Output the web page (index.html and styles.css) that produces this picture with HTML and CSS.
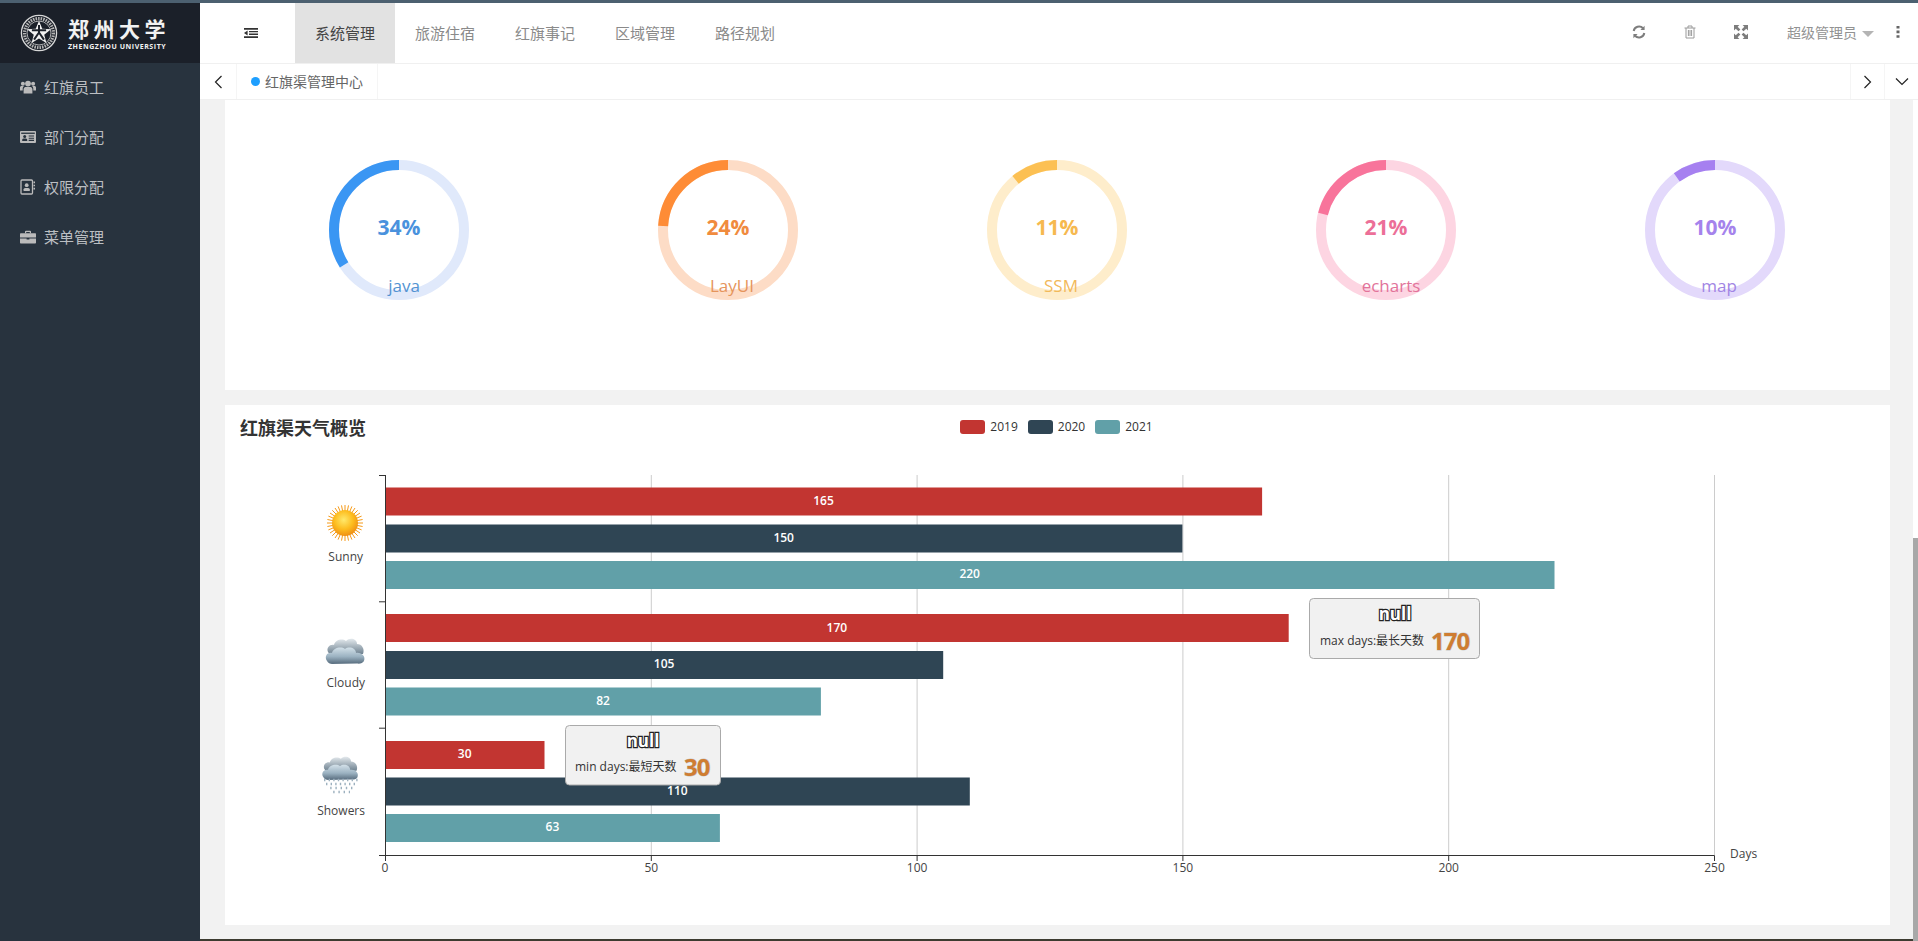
FILE: index.html
```html
<!DOCTYPE html>
<html lang="zh-CN">
<head>
<meta charset="utf-8">
<title>红旗渠管理中心</title>
<link rel="stylesheet" href="styles.css">
</head>
<body>
<div class="topline"></div>
<div class="app">
  <aside class="sidebar">
    <div class="logo">
      <svg class="emblem" width="38" height="38" viewBox="0 0 40 40">
        <circle cx="20" cy="20" r="18.5" fill="none" stroke="#d8d8d8" stroke-width="1.4"/>
        <circle cx="20" cy="20" r="15.2" fill="none" stroke="#b5b5b5" stroke-width="3.4" stroke-dasharray="1.6 1.1"/>
        <circle cx="20" cy="20" r="12.6" fill="none" stroke="#d8d8d8" stroke-width="0.8"/>
        <polygon points="20,7 23.4,15.4 32.6,16 25.5,21.8 27.8,30.6 20,25.8 12.2,30.6 14.5,21.8 7.4,16 16.6,15.4" fill="#f2f2f2"/>
        <path d="M20 11.5V20M12.5 17.2H27.5M20 19.5L14.8 27M20 19.5L25.2 27" fill="none" stroke="#1b2029" stroke-width="2.1"/>
      </svg>
      <div class="wordmark">
        <div class="wordmark-cn">郑州大学</div>
        <div class="wordmark-en">ZHENGZHOU UNIVERSITY</div>
      </div>
    </div>
    <ul class="menu">
      <li class="menu-item">
        <svg width="16" height="16" viewBox="0 0 16 16"><circle cx="8" cy="4.6" r="2.9" fill="#bbb"/><circle cx="2.9" cy="4.8" r="2" fill="#bbb"/><circle cx="13.1" cy="4.8" r="2" fill="#bbb"/><path d="M3.6 14.6V10.4C3.6 8.6 5 8 6 8H10C11 8 12.4 8.6 12.4 10.4V14.6Z" fill="#bbb"/><path d="M0 11.4V8.6C0 7.6 .8 7.1 1.6 7.1H4C2.9 8 2.7 9 2.7 10.4V11.4ZM16 11.4V8.6C16 7.6 15.2 7.1 14.4 7.1H12C13.1 8 13.3 9 13.3 10.4V11.4Z" fill="#bbb"/></svg>
        <span>红旗员工</span>
      </li>
      <li class="menu-item">
        <svg width="16" height="16" viewBox="0 0 16 16"><rect y="2" width="16" height="12" rx="1" fill="#bbb"/><rect x="1.2" y="3.6" width="13.6" height="1.3" fill="#28333e"/><circle cx="4.7" cy="7.6" r="1.5" fill="#28333e"/><path d="M2.2 12V10.7C2.2 9.9 3 9.5 4.7 9.5S7.2 9.9 7.2 10.7V12Z" fill="#28333e"/><path d="M8.7 7H14M8.7 9.2H14M8.7 11.4H14" stroke="#28333e" stroke-width="1.1"/></svg>
        <span>部门分配</span>
      </li>
      <li class="menu-item">
        <svg width="16" height="16" viewBox="0 0 16 16"><rect x="1" y="1" width="11.5" height="14" rx="1" fill="none" stroke="#bbb" stroke-width="1.3"/><circle cx="6.7" cy="6.2" r="1.9" fill="#bbb"/><path d="M3.6 12V10.3C3.6 9.3 4.8 8.9 6.7 8.9S9.8 9.3 9.8 10.3V12Z" fill="#bbb"/><path d="M13.5 3.4H15M13.5 6.5H15M13.5 9.6H15" stroke="#bbb" stroke-width="1.6"/></svg>
        <span>权限分配</span>
      </li>
      <li class="menu-item">
        <svg width="16" height="16" viewBox="0 0 16 16"><path d="M5 4.2V2.6C5 2 5.4 1.7 6 1.7H10C10.6 1.7 11 2 11 2.6V4.2H9.8V2.9H6.2V4.2Z" fill="#bbb"/><path d="M0 5.2C0 4.6.4 4.2 1 4.2H15C15.6 4.2 16 4.6 16 5.2V8.4H0Z" fill="#bbb"/><path d="M0 9.4H6.6V10.6H9.4V9.4H16V13.4C16 14 15.6 14.4 15 14.4H1C.4 14.4 0 14 0 13.4Z" fill="#bbb"/></svg>
        <span>菜单管理</span>
      </li>
    </ul>
  </aside>

  <div class="main">
    <header class="header">
      <div class="toggle">
        <svg width="14" height="10" viewBox="0 0 14 10"><path d="M0 0H14V1.8H0ZM5 2.9H14V4.3H5ZM5 5.5H14V7H5ZM0 8.2H14V10H0ZM3.6 2.6V7.4L0 5Z" fill="#333"/></svg>
      </div>
      <nav class="nav">
        <a class="nav-item nav-item-active">系统管理</a>
        <a class="nav-item">旅游住宿</a>
        <a class="nav-item">红旗事记</a>
        <a class="nav-item">区域管理</a>
        <a class="nav-item">路径规划</a>
      </nav>
      <div class="tools">
        <svg class="tool tool-refresh" width="14" height="14" viewBox="0 0 14 14"><path d="M1.7 6A5.4 5.4 0 0 1 11 3.2M12.3 8A5.4 5.4 0 0 1 3 10.8" fill="none" stroke="#7d7d7d" stroke-width="2"/><path d="M12.6 .8V5H8.4ZM1.4 13.2V9H5.6Z" fill="#7d7d7d"/></svg>
        <svg class="tool tool-trash" width="12" height="14" viewBox="0 0 12 14"><path d="M.5 3H11.5M4 3V1H8V3M2 3V13H10V3M4.4 5V11M6 5V11M7.6 5V11" fill="none" stroke="#9a9a9a" stroke-width="1"/></svg>
        <svg class="tool tool-full" width="14" height="14" viewBox="0 0 13 13"><path d="M0 0H5L3.4 1.6 5.9 4.2 4.2 5.9 1.6 3.4 0 5ZM13 0V5L11.4 3.4 8.8 5.9 7.1 4.2 9.6 1.6 8 0ZM0 13V8L1.6 9.6 4.2 7.1 5.9 8.8 3.4 11.4 5 13ZM13 13H8L9.6 11.4 7.1 8.8 8.8 7.1 11.4 9.6 13 8Z" fill="#7d7d7d"/></svg>
        <span class="user">超级管理员</span>
        <span class="caret"></span>
        <svg class="tool-more" width="4" height="12" viewBox="0 0 4 12"><path d="M.5 0H3.5V2.6H.5ZM.5 4.6H3.5V7.2H.5ZM.5 9.2H3.5V11.8H.5Z" fill="#666"/></svg>
      </div>
    </header>

    <div class="tabbar">
      <div class="tab-arrow">
        <svg width="9" height="14" viewBox="0 0 9 14"><path d="M7.5 1 1.5 7 7.5 13" fill="none" stroke="#222" stroke-width="1.2"/></svg>
      </div>
      <div class="tab">
        <span class="tab-dot"></span>
        <span class="tab-text">红旗渠管理中心</span>
      </div>
      <div class="tab-spacer"></div>
      <div class="tab-arrow tab-arrow-right">
        <svg width="9" height="14" viewBox="0 0 9 14"><path d="M1.5 1 7.5 7 1.5 13" fill="none" stroke="#222" stroke-width="1.2"/></svg>
      </div>
      <div class="tab-arrow tab-arrow-right">
        <svg width="14" height="9" viewBox="0 0 14 9"><path d="M1 1.5 7 7.5 13 1.5" fill="none" stroke="#222" stroke-width="1.2"/></svg>
      </div>
    </div>

    <main class="content">
      <section class="card card-skills">
        <div class="donuts">
          <svg class="donut" width="150" height="140" viewBox="0 0 150 140">
            <circle cx="70" cy="70" r="65" class="ring ring-blue-bg"/>
            <circle cx="70" cy="70" r="65" class="ring ring-blue" pathLength="100" stroke-dasharray="34 66" stroke-dashoffset="34" transform="rotate(-90 70 70)"/>
            <text x="70" y="75" class="donut-pct text-blue">34%</text>
            <text x="75" y="132" class="donut-name name-blue">java</text>
          </svg>
          <svg class="donut" width="150" height="140" viewBox="0 0 150 140">
            <circle cx="70" cy="70" r="65" class="ring ring-orange-bg"/>
            <circle cx="70" cy="70" r="65" class="ring ring-orange" pathLength="100" stroke-dasharray="24 76" stroke-dashoffset="24" transform="rotate(-90 70 70)"/>
            <text x="70" y="75" class="donut-pct text-orange">24%</text>
            <text x="74" y="132" class="donut-name name-orange">LayUI</text>
          </svg>
          <svg class="donut" width="150" height="140" viewBox="0 0 150 140">
            <circle cx="70" cy="70" r="65" class="ring ring-yellow-bg"/>
            <circle cx="70" cy="70" r="65" class="ring ring-yellow" pathLength="100" stroke-dasharray="11 89" stroke-dashoffset="11" transform="rotate(-90 70 70)"/>
            <text x="70" y="75" class="donut-pct text-yellow">11%</text>
            <text x="74" y="132" class="donut-name name-yellow">SSM</text>
          </svg>
          <svg class="donut" width="150" height="140" viewBox="0 0 150 140">
            <circle cx="70" cy="70" r="65" class="ring ring-pink-bg"/>
            <circle cx="70" cy="70" r="65" class="ring ring-pink" pathLength="100" stroke-dasharray="21 79" stroke-dashoffset="21" transform="rotate(-90 70 70)"/>
            <text x="70" y="75" class="donut-pct text-pink">21%</text>
            <text x="75" y="132" class="donut-name name-pink">echarts</text>
          </svg>
          <svg class="donut" width="150" height="140" viewBox="0 0 150 140">
            <circle cx="70" cy="70" r="65" class="ring ring-purple-bg"/>
            <circle cx="70" cy="70" r="65" class="ring ring-purple" pathLength="100" stroke-dasharray="10 90" stroke-dashoffset="10" transform="rotate(-90 70 70)"/>
            <text x="70" y="75" class="donut-pct text-purple">10%</text>
            <text x="74" y="132" class="donut-name name-purple">map</text>
          </svg>
        </div>
      </section>

      <section class="card card-weather">
        <div class="card-head">
          <h2 class="card-title">红旗渠天气概览</h2>
          <div class="legend">
            <span class="legend-item"><i class="swatch swatch-red"></i>2019</span>
            <span class="legend-item"><i class="swatch swatch-navy"></i>2020</span>
            <span class="legend-item"><i class="swatch swatch-teal"></i>2021</span>
          </div>
        </div>
        <svg class="chart" width="1665" height="474" viewBox="225 451 1665 474">
          <defs>
            <radialGradient id="sunFill" cx="0.45" cy="0.38" r="0.65">
              <stop offset="0" stop-color="#ffe96b"/>
              <stop offset="0.55" stop-color="#fdbd1f"/>
              <stop offset="1" stop-color="#ee8a12"/>
            </radialGradient>
            <linearGradient id="cloudBack" x1="0" y1="0" x2="0" y2="1">
              <stop offset="0" stop-color="#e2e8ec"/>
              <stop offset="1" stop-color="#5f7484"/>
            </linearGradient>
            <linearGradient id="cloudFront" gradientUnits="userSpaceOnUse" x1="0" y1="-4" x2="0" y2="12">
              <stop offset="0" stop-color="#d6e3eb"/>
              <stop offset="0.6" stop-color="#9bb2c1"/>
              <stop offset="1" stop-color="#5f7485"/>
            </linearGradient>
            <g id="clouds">
              <path fill="url(#cloudBack)" d="M-17 1C-19-3-15-7-11-6C-10-11-3-13 1-10C5-14 12-12 12-7C17-7 20-2 18 3L-14 5Z"/>
              <path fill="url(#cloudFront)" d="M-18 10C-21 6-18 1-13 2C-12-3-4-5 0-2C4-5 11-3 11 2C16 1 21 5 19 10C18 12 15 13 12 12.500L-13 13C-15 13-17 12-18 10Z"/>
            </g>
          </defs>

          <g class="grid">
            <path d="M651.3 475V855M917.1 475V855M1182.9 475V855M1448.7 475V855M1714.5 475V855"/>
          </g>

          <rect x="385" y="487.500" width="877.1" height="28" class="bar-red"/>
          <rect x="385" y="524.500" width="797.4" height="28" class="bar-navy"/>
          <rect x="385" y="561" width="1169.5" height="28" class="bar-teal"/>
          <rect x="385" y="614" width="903.7" height="28" class="bar-red"/>
          <rect x="385" y="651" width="558.2" height="28" class="bar-navy"/>
          <rect x="385" y="687.500" width="435.9" height="28" class="bar-teal"/>
          <rect x="385" y="741" width="159.5" height="28" class="bar-red"/>
          <rect x="385" y="777.500" width="584.8" height="28" class="bar-navy"/>
          <rect x="385" y="814" width="334.9" height="28" class="bar-teal"/>

          <text x="823.5" y="505" class="bar-label">165</text>
          <text x="783.7" y="541.500" class="bar-label">150</text>
          <text x="969.7" y="578" class="bar-label">220</text>
          <text x="836.9" y="631.500" class="bar-label">170</text>
          <text x="664.1" y="668" class="bar-label">105</text>
          <text x="603" y="704.500" class="bar-label">82</text>
          <text x="464.7" y="758" class="bar-label">30</text>
          <text x="677.4" y="794.500" class="bar-label">110</text>
          <text x="552.4" y="831" class="bar-label">63</text>

          <path class="axis" d="M385.5 475V855.5M379 475.5H385.5M379 601.8H385.5M379 728.2H385.5M379 855.5H1714.5M385.5 855.5V861M651.3 855.5V861M917.1 855.5V861M1182.9 855.5V861M1448.7 855.5V861M1714.5 855.5V861"/>

          <text x="385" y="872" class="tick">0</text>
          <text x="651.3" y="872" class="tick">50</text>
          <text x="917.1" y="872" class="tick">100</text>
          <text x="1182.9" y="872" class="tick">150</text>
          <text x="1448.7" y="872" class="tick">200</text>
          <text x="1714.5" y="872" class="tick">250</text>
          <text x="1730" y="858" class="axis-name">Days</text>

          <g transform="translate(345 523)">
            <g class="sun-rays">
              <path d="M0-18V18M-18 0H18M-12.7-12.7 12.7 12.7M-12.7 12.7 12.7-12.7M-6.9-16.6 6.9 16.6M6.9-16.6-6.9 16.6M-16.6-6.9 16.6 6.9M-16.6 6.9 16.6-6.9M-3.5-17.6 3.5 17.6M3.5-17.6-3.5 17.6M-17.6-3.5 17.6 3.5M-17.6 3.500 17.6-3.5M-10-15 10 15M10-15-10 15M-15-10 15 10M-15 10 15-10"/>
            </g>
            <circle r="13" fill="url(#sunFill)"/>
          </g>
          <text x="363" y="561" class="cat">Sunny</text>

          <use href="#clouds" transform="translate(345 651)"/>
          <text x="365" y="687" class="cat">Cloudy</text>

          <use href="#clouds" transform="translate(340 768) scale(.92)"/>
          <path class="rain rain-a" d="M324 780H358M326 784H356"/>
          <path class="rain rain-b" d="M327 788H354M330 792H350"/>
          <text x="365" y="815" class="cat">Showers</text>

          <g>
            <rect x="1309.5" y="598.5" width="170" height="60" rx="4" class="tip-box"/>
            <text x="1395" y="620" class="tip-null">null</text>
            <text x="1320" y="645" class="tip-text">max days:最长天数</text>
            <text x="1431" y="650" class="tip-value">170</text>
          </g>
          <g>
            <rect x="565.5" y="725.5" width="155" height="59.5" rx="4" class="tip-box"/>
            <text x="643" y="747" class="tip-null">null</text>
            <text x="575" y="771" class="tip-text">min days:最短天数</text>
            <text x="684" y="776" class="tip-value">30</text>
          </g>
        </svg>
      </section>
    </main>
    <div class="bottomline"></div>
    <div class="scrollbar"><div class="scroll-thumb"></div></div>
  </div>
</div>
</body>
</html>
```
FILE: styles.css
```css
* { box-sizing: border-box; }
html, body { margin: 0; height: 100%; overflow: hidden; }
body {
  display: flex;
  flex-direction: column;
  height: 941px;
  font-family: "Open Sans", "Noto Sans CJK SC", sans-serif;
  color: #333;
  background: #f2f2f2;
}
.topline { height: 3px; background: #4c6070; flex: none; }
.app { flex: 1; display: flex; min-height: 0; }

/* sidebar */
.sidebar { width: 200px; flex: none; background: #28333e; }
.logo {
  height: 60px;
  background: #1b2029;
  display: flex;
  align-items: center;
  padding-left: 20px;
  gap: 10px;
}
.emblem { flex: none; }
.wordmark { color: #f2f2f2; }
.wordmark-cn {
  font-family: "Noto Sans CJK SC", sans-serif;
  font-weight: 700;
  font-size: 21px;
  line-height: 26px;
  letter-spacing: 4.5px;
  white-space: nowrap;
}
.wordmark-en {
  font-size: 7px;
  font-weight: 700;
  line-height: 9px;
  letter-spacing: .55px;
  white-space: nowrap;
  margin-top: 1px;
}
.menu { list-style: none; margin: 0; padding: 0; }
.menu-item {
  height: 50px;
  display: flex;
  align-items: center;
  gap: 8px;
  padding: 0 0 3px 20px;
  font-family: "Noto Sans CJK SC", sans-serif;
  font-size: 15px;
  color: #bcbfc2;
}

/* main */
.main { flex: 1; min-width: 0; display: flex; flex-direction: column; position: relative; }
.header {
  height: 61px;
  flex: none;
  display: flex;
  align-items: stretch;
  background: #fff;
  border-bottom: 1px solid #f0f0f0;
}
.toggle { width: 95px; display: flex; align-items: center; padding-left: 44px; }
.nav { display: flex; }
.nav-item {
  width: 100px;
  display: flex;
  align-items: center;
  justify-content: center;
  padding-bottom: 2px;
  font-family: "Noto Sans CJK SC", sans-serif;
  font-size: 15px;
  color: #8a8a8a;
}
.nav-item-active { background: #e2e2e2; color: #444; }
.tools { margin-left: auto; display: flex; align-items: center; padding: 0 18px 2px 0; }
.tool-refresh { margin-right: 38px; }
.tool-trash { margin-right: 38px; }
.tool-full { margin-right: 39px; }
.user { font-family: "Noto Sans CJK SC", sans-serif; font-size: 14px; color: #929292; }
.caret {
  width: 0;
  height: 0;
  margin: 3px 0 0 5px;
  border-left: 6px solid transparent;
  border-right: 6px solid transparent;
  border-top: 6px solid #b4b4b4;
}
.tool-more { margin-left: 22px; }

.tabbar {
  height: 36px;
  flex: none;
  display: flex;
  align-items: stretch;
  background: #fff;
  border-bottom: 1px solid #f0f0f0;
}
.tab-arrow {
  width: 37px;
  display: flex;
  align-items: center;
  justify-content: center;
  border-right: 1px solid #f5f5f5;
}
.tab-arrow-right { width: 34px; border-right: 0; border-left: 1px solid #f5f5f5; }
.tab {
  width: 141px;
  display: flex;
  align-items: center;
  gap: 5px;
  padding-left: 14px;
  border-right: 1px solid #f5f5f5;
  font-family: "Noto Sans CJK SC", sans-serif;
  font-size: 14px;
  color: #666;
}
.tab-text { margin-top: -2px; }
.tab-dot { width: 9px; height: 9px; border-radius: 50%; background: #1e9fff; flex: none; }
.tab-spacer { flex: 1; }

/* content */
.content {
  flex: 1;
  min-height: 0;
  display: flex;
  flex-direction: column;
  gap: 15px;
  padding: 0 28px 14px 25px;
  background: #f2f2f2;
}
.card { background: #fff; }
.card-skills { height: 290px; padding: 60px 0 0 9px; flex: none; }
.card-weather { height: 520px; flex: none; }
.bottomline { height: 2px; margin-top: -2px; flex: none; background: #3d3b30; }
.scrollbar { position: absolute; top: 97px; right: 0; bottom: 0; width: 5px; background: #fff; }
.scroll-thumb { margin-top: 438px; height: 403px; background: #a8a8a8; }

.donuts { display: grid; grid-template-columns: repeat(5, 329px); padding-left: 95px; }
.donut { display: block; overflow: visible; }
.ring { fill: none; stroke-width: 10; }
.ring-blue-bg { stroke: #e0e9fb; }
.ring-blue { stroke: #3a96f3; }
.ring-orange-bg { stroke: #fddcc6; }
.ring-orange { stroke: #fe8c36; }
.ring-yellow-bg { stroke: #feedcb; }
.ring-yellow { stroke: #fcc053; }
.ring-pink-bg { stroke: #fdd5e2; }
.ring-pink { stroke: #f8749b; }
.ring-purple-bg { stroke: #e3d9fb; }
.ring-purple { stroke: #a680f0; }
.donut-pct { font-size: 21px; font-weight: 700; text-anchor: middle; }
.donut-name { font-size: 17px; text-anchor: middle; }
.text-blue { fill: #4a92dd; }
.text-orange { fill: #f08b3e; }
.text-yellow { fill: #f6b94f; }
.text-pink { fill: #ec6f98; }
.text-purple { fill: #a583ec; }
.name-blue { fill: #5393d2; }
.name-orange { fill: #e5955c; }
.name-yellow { fill: #f2b95a; }
.name-pink { fill: #e2739a; }
.name-purple { fill: #a185e4; }

/* weather */
.card-head {
  height: 46px;
  display: grid;
  grid-template-columns: 1fr auto 1fr;
  align-items: start;
  padding: 0 15px;
}
.card-title {
  margin: 0;
  font-family: "Noto Sans CJK SC", sans-serif;
  font-size: 18px;
  line-height: 44px;
  font-weight: 700;
  color: #333;
}
.legend { display: flex; gap: 10px; margin: 15px 0 0 -2px; font-size: 12px; line-height: 14px; color: #333; }
.legend-item { display: flex; align-items: center; gap: 5px; }
.swatch { width: 25px; height: 14px; border-radius: 3px; display: block; }
.swatch-red { background: #c23531; }
.swatch-navy { background: #2f4554; }
.swatch-teal { background: #61a0a8; }
.chart { display: block; }
.grid path { stroke: #ccc; stroke-width: 1; fill: none; }
.axis { stroke: #333; stroke-width: 1; fill: none; }
.bar-red { fill: #c23531; }
.bar-navy { fill: #2f4554; }
.bar-teal { fill: #61a0a8; }
.bar-label { font-size: 12px; font-weight: 600; fill: #fff; text-anchor: middle; }
.tick { font-size: 12px; fill: #444; text-anchor: middle; }
.axis-name { font-size: 12px; fill: #444; }
.cat { font-size: 12px; fill: #444; text-anchor: end; }
.sun-rays path { stroke: #f59a18; stroke-width: 1; fill: none; }
.rain { stroke: #9db1bf; stroke-width: 2.4; fill: none; }
.rain-a { stroke-dasharray: 1.4 3.2; }
.rain-b { stroke-dasharray: 1.4 3.8; stroke-dashoffset: 2; }
.tip-box { fill: #f1f1f1; stroke: #aaa; stroke-width: 1; }
.tip-null {
  font-size: 17px;
  font-weight: 700;
  text-anchor: middle;
  fill: #fff;
  stroke: #222;
  stroke-width: 2.4px;
  paint-order: stroke;
}
.tip-text { font-size: 12px; fill: #333; }
.tip-value {
  font-size: 24px;
  font-weight: 700;
  letter-spacing: -1px;
  fill: #cf7d32;
  stroke: rgba(110, 110, 110, .35);
  stroke-width: 1px;
  paint-order: stroke;
}
```
